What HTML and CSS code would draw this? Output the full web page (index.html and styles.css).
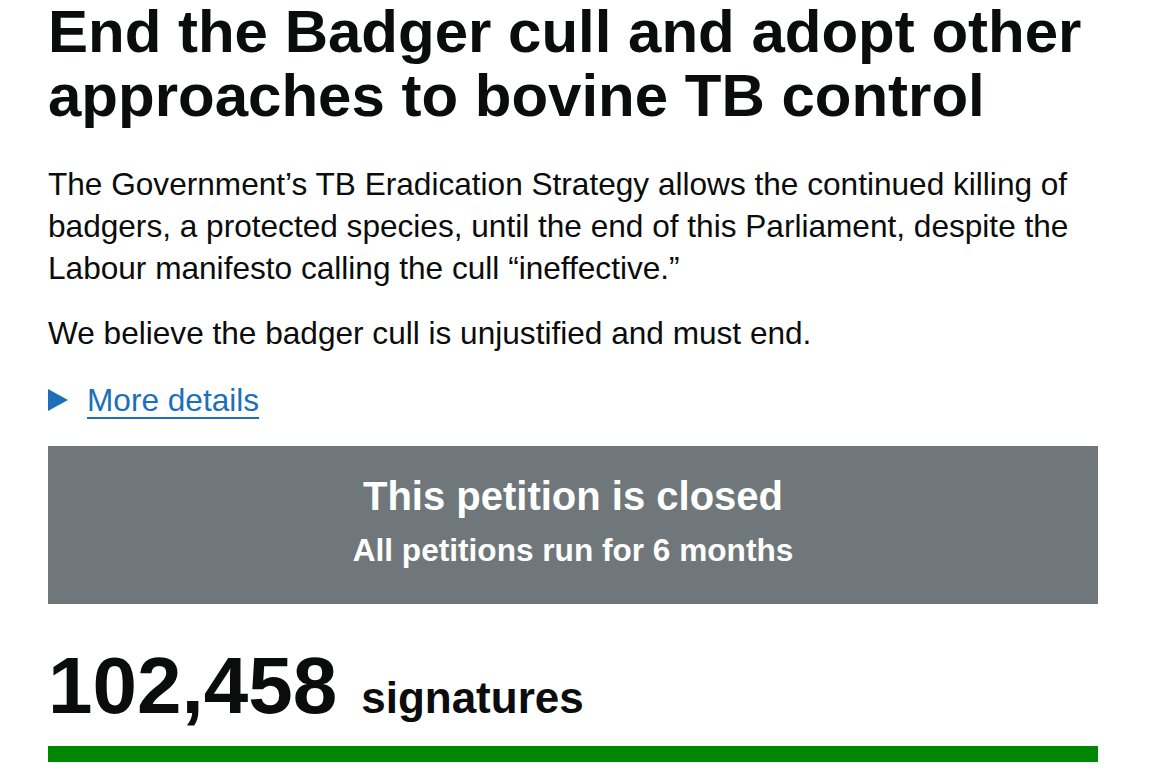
FILE: index.html
```html
<!DOCTYPE html>
<html lang="en">
<head>
<meta charset="utf-8">
<title>End the Badger cull and adopt other approaches to bovine TB control</title>
<link rel="stylesheet" href="styles.css">
</head>
<body>
<main class="page">
  <h1 class="title">End the Badger cull and adopt other approaches to bovine TB control</h1>
  <p class="lede">The Government’s TB Eradication Strategy allows the continued killing of badgers, a protected species, until the end of this Parliament, despite the Labour manifesto calling the cull “ineffective.”</p>
  <p class="lede second">We believe the badger cull is unjustified and must end.</p>
  <div class="details">
    <svg class="arrow" width="20" height="22" viewBox="0 0 20 22" aria-hidden="true"><polygon points="0,0 20,11 0,22" fill="#1d70b8"/></svg>
    <a class="more" href="#">More details</a>
  </div>
  <section class="closed">
    <div class="closed-title">This petition is closed</div>
    <div class="closed-sub">All petitions run for 6 months</div>
  </section>
  <div class="signatures"><span class="count">102,458</span><span class="label">signatures</span></div>
  <div class="progress"></div>
</main>
</body>
</html>
```
FILE: styles.css
```css
html, body {
  margin: 0;
  padding: 0;
  background: #ffffff;
}
body {
  font-family: "Liberation Sans", Arial, sans-serif;
  color: #0b0c0c;
}
.page {
  padding: 0 52px 0 48px;
}
.title {
  font-size: 60px;
  line-height: 64px;
  font-weight: 700;
  margin: 0;
}
.lede {
  font-size: 31.6px;
  line-height: 42px;
  margin: 35px 0 0;
}
.lede.second {
  margin-top: 23px;
}
.details {
  display: flex;
  align-items: center;
  gap: 19px;
  margin-top: 25px;
  height: 42px;
}
.arrow {
  display: block;
  flex: none;
}
.more {
  font-size: 31.6px;
  line-height: 42px;
  color: #1d70b8;
  text-decoration: underline;
  text-decoration-thickness: 2px;
  text-underline-offset: 6px;
}
.closed {
  margin-top: 25px;
  background: #6f777b;
  color: #ffffff;
  text-align: center;
  padding: 25px 20px 33px;
}
.closed-title {
  font-size: 40px;
  line-height: 50px;
  font-weight: 700;
}
.closed-sub {
  font-size: 31.6px;
  line-height: 42px;
  font-weight: 700;
  margin-top: 8px;
}
.signatures {
  display: flex;
  align-items: baseline;
  gap: 24px;
  margin-top: 42px;
  font-weight: 700;
}
.count {
  font-size: 80px;
  line-height: 80px;
}
.label {
  font-size: 44px;
  line-height: 44px;
}
.progress {
  margin-top: 20px;
  height: 16px;
  background: #008700;
}
```
